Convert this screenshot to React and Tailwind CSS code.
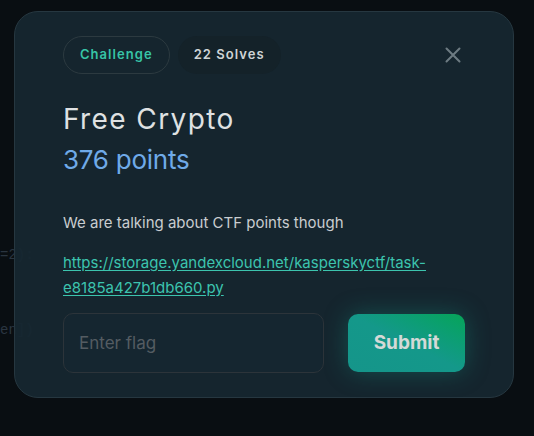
// Challenge modal: badge row, title, points, description, flag form

const CloseIcon = ({ className = '' }) => (
  <svg viewBox="0 0 16 16" fill="none" stroke="currentColor" strokeWidth="2" strokeLinecap="round" className={className} aria-hidden="true">
    <path d="M1.5 1.5l13 13M14.5 1.5l-13 13" />
  </svg>
);

const Badge = ({ children, className = '' }) => (
  <span className={`inline-flex items-center h-[38px] rounded-full px-4 text-[13px] font-semibold tracking-[0.08em] ${className}`}>
    {children}
  </span>
);

export default function App() {
  return (
    <div
      className="relative w-[534px] h-[436px] overflow-hidden bg-[#090e12] pt-[11px] pl-[14px]"
      style={{ fontFamily: 'Inter, "Noto Sans", sans-serif' }}
    >
      {/* faint code behind the modal */}
      <div className="absolute left-0 top-[218px] font-['Liberation_Mono',monospace] text-[14px] text-[#2a3540] leading-[75px]">
        <div>=2):</div>
        <div>en])</div>
      </div>

      <div className="relative w-[500px] h-[387px] rounded-[24px] border border-[#263740] bg-[#162730]/95 px-12 pt-[24px]">
        <div className="flex items-center gap-2">
          <Badge className="border border-[#2c3a40] text-[#37c4a6] px-[16px]">Challenge</Badge>
          <Badge className="bg-[#142229] text-[#cfd4d6] px-[16px]">22 Solves</Badge>
          <button type="button" className="ml-auto mr-[4px] text-[#6d7b82]">
            <CloseIcon className="w-4 h-4" />
          </button>
        </div>

        <h2 className="mt-[27px] text-[28px] leading-[36px] tracking-[0.05em] text-[#dfe1e2]">Free Crypto</h2>
        <p className="mt-[6px] text-[26px] leading-[34px] tracking-[-0.01em] text-[#6faae8]">376 points</p>

        <p className="mt-[34px] text-[15px] leading-[24px] text-[#c9cdd0]">We are talking about CTF points though</p>
        <a
          href="#"
          className="block mt-[15px] text-[15px] leading-[25px] text-[#3cc4ae] underline underline-offset-2"
        >
          https://storage.yandexcloud.net/kasperskyctf/task-e8185a427b1db660.py
        </a>

        <form className="mt-[13px] flex items-center gap-6" onSubmit={e => e.preventDefault()}>
          <input
            type="text"
            placeholder="Enter flag"
            className="w-[261px] h-[60px] rounded-[10px] border border-[#2c343a] bg-[#152630] px-[15px] text-[17px] text-[#d0d4d6] placeholder:text-[#545c62] outline-none"
          />
          <button
            type="submit"
            className="w-[118px] h-[58px] rounded-[10px] bg-gradient-to-tr from-[#15958a] via-[#14988a] to-[#07a457] text-[19px] font-bold text-[#d4d9d7] shadow-[0_0_24px_rgba(20,160,140,0.35)]"
          >
            Submit
          </button>
        </form>
      </div>
    </div>
  );
}
